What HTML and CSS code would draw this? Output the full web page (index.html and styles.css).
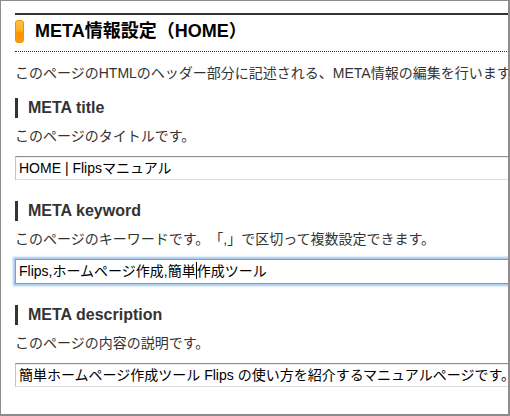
FILE: index.html
```html
<!DOCTYPE html>
<html lang="ja">
<head>
<meta charset="utf-8">
<title>META情報設定</title>
<link rel="stylesheet" href="styles.css">
</head>
<body>
<div class="frame">
  <div class="content">
    <h1 class="page-title"><span class="title-bar"></span><span class="title-text">META情報設定（HOME）</span></h1>
    <p class="lead">このページのHTMLのヘッダー部分に記述される、META情報の編集を行います。</p>

    <section class="field-group first">
      <h2 class="field-label">META title</h2>
      <p class="field-help">このページのタイトルです。</p>
      <div class="field">HOME | Flipsマニュアル</div>
    </section>

    <section class="field-group">
      <h2 class="field-label">META keyword</h2>
      <p class="field-help">このページのキーワードです。「,」で区切って複数設定できます。</p>
      <div class="field focused">Flips,ホームページ作成,簡単<span class="caret"></span>作成ツール</div>
    </section>

    <section class="field-group">
      <h2 class="field-label">META description</h2>
      <p class="field-help">このページの内容の説明です。</p>
      <div class="field">簡単ホームページ作成ツール Flips の使い方を紹介するマニュアルページです。</div>
    </section>
  </div>
</div>
</body>
</html>
```

FILE: styles.css
```css
html, body {
  margin: 0;
  padding: 0;
  background: #ffffff;
}

body {
  font-family: "Liberation Sans", "Noto Sans CJK JP", sans-serif;
  color: #333333;
  text-spacing-trim: space-all;
}

.frame {
  box-sizing: border-box;
  width: 510px;
  height: 416px;
  overflow: hidden;
  border: 1px solid #8c8c8c;
  border-right-width: 2px;
  border-bottom-width: 2px;
  background: #ffffff;
}

.content {
  width: 640px;
  padding: 12px 0 0 14px;
}

.page-title {
  margin: 0;
  display: flex;
  align-items: center;
  gap: 11px;
  border-top: 2px solid #333333;
  border-bottom: 1px dotted #333333;
  padding: 5px 0 8px 0;
  font-size: 18px;
  line-height: 23px;
  font-weight: bold;
  color: #000000;
}

.title-bar {
  display: block;
  width: 7px;
  height: 21px;
  border: 1px solid #f29000;
  border-radius: 3px;
  background: linear-gradient(#ffc447 0%, #ffae1a 48%, #ff9200 52%, #ff9a0a 100%);
}

.lead {
  margin: 11px 0 0 0;
  font-size: 14px;
  line-height: 20px;
  color: #333333;
  white-space: nowrap;
}

.field-group {
  margin-top: 21px;
}

.field-group.first {
  margin-top: 15px;
}

.field-label {
  margin: 0;
  border-left: 3px solid #333333;
  padding-left: 10px;
  font-size: 16px;
  line-height: 20px;
  font-weight: bold;
  color: #333333;
}

.field-help {
  margin: 8px 0 0 0;
  font-size: 14px;
  line-height: 20px;
  color: #333333;
  white-space: nowrap;
}

.field {
  box-sizing: border-box;
  margin-top: 10px;
  width: 620px;
  height: 24px;
  padding: 0 3px;
  border: 1px solid #c4c4c4;
  border-top-color: #8e8e8e;
  border-bottom-color: #dcdcdc;
  box-shadow: inset 0 1px 1px rgba(0, 0, 0, 0.08);
  font-size: 14px;
  line-height: 22px;
  color: #000000;
  white-space: nowrap;
  background: #ffffff;
}

.field.focused {
  border: 1px solid #7a9fcc;
  box-shadow: 0 0 2px 2px #a6c6ea;
  height: 25px;
  line-height: 23px;
}

.caret {
  display: inline-block;
  width: 1px;
  height: 17px;
  background: #000000;
  vertical-align: -3px;
}
```
